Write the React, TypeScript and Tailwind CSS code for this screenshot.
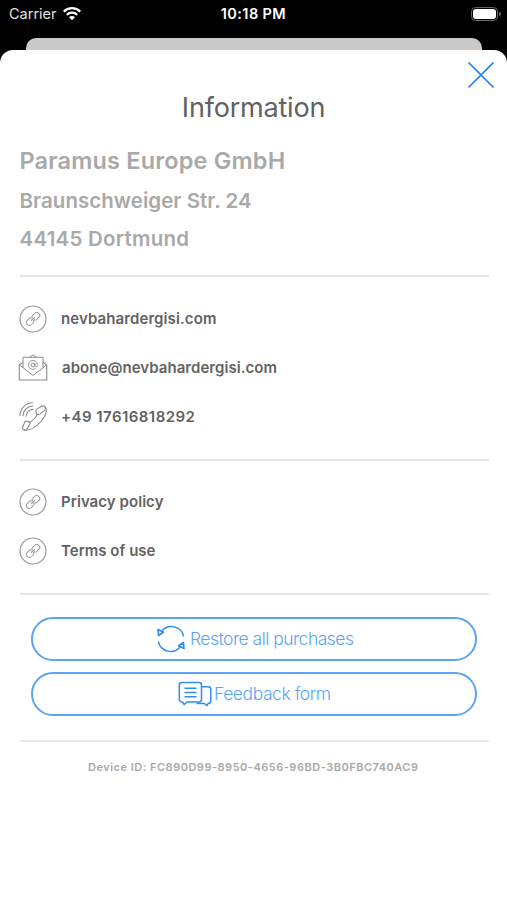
import type { ReactNode } from "react";

const LinkIcon = () => (
  <svg width="28" height="28" viewBox="0 0 28 28" fill="none" stroke="#999">
    <circle cx="14" cy="14" r="13" strokeWidth="1.2" />
    <g transform="rotate(-43 14 14)" strokeWidth="1">
      <path d="M13.600 12.800c-.1-1.100-.8-1.700-1.800-1.700H8.300a2.200 2.200 0 0 0-2.200 2.200v1.400a2.200 2.200 0 0 0 2.200 2.200h3.500c1 0 1.700-.6 1.800-1.700" />
      <path d="M14.400 12.800c.1-1.100.8-1.700 1.800-1.700h3.500a2.200 2.200 0 0 1 2.200 2.200v1.400a2.200 2.200 0 0 1-2.200 2.200h-3.500c-1 0-1.700-.6-1.800-1.700" />
      <path d="M11.500 14h5" strokeWidth="1.300" />
    </g>
  </svg>
);

const MailIcon = () => (
  <svg width="30" height="28" viewBox="0 0 30 28" fill="none" stroke="#8a8a8a" strokeLinejoin="round">
    <path d="M5 8.500 1.300 10.800v15.200h27.400V10.800L25 8.500" strokeWidth="1.100" />
    <path d="M5 13.700V3.300h20v10.400M11.500 3.300 15 .9l3.500 2.400" />
    <path d="m1.300 10.800 13.700 10.600 13.700-10.600" />
    <circle cx="15" cy="11" r="1.900" strokeWidth=".9" />
    <path d="M16.900 9.200v2.500c0 1.700 2.600 1.300 2.600-.9a4.500 4.500 0 1 0-1.900 3.800" strokeWidth=".9" />
  </svg>
);

const PhoneIcon = () => (
  <svg width="28" height="30" viewBox="0 0 28 30" fill="none" stroke="#8a8a8a" strokeWidth="1.100" strokeLinecap="round" strokeLinejoin="round">
    <path d="M22.200 4.200c1.800-.7 3.400-.3 4.200 1.100 1.600 3.300.3 8.900-4.500 14.200-5.700 6.200-12.200 9.300-16.400 8.600-2-.4-2.900-2.400-1.500-3.900" />
    <path d="M22.200 4.200 18 7.100c-1.100.8-1.400 2-.9 3.200l.6 1.300c.3.800.2 1.400-.2 2.100-1.400 2.400-3.200 4.300-5.500 5.900-.7.500-1.300.6-2 .3l-1.400-.5c-1.100-.4-2.200-.2-2.900.7L4 24.200" />
    <path d="M17.900 12c.9.700 2.200.6 3.200-.1l3.900-3c1.100-.9 1.700-2.200 1.400-3.600M10.300 19.900c.9.900.9 2.100.2 3.100l-2.400 3.500c-.7 1-1.600 1.600-2.600 1.600" />
    <path d="M.9 13.500C1.200 6.500 6.700 1 13.500.8M4 13.800C4.200 8.400 8.400 4.200 13.700 4M7.200 14c.2-3.500 2.900-6.300 6.600-6.600" />
  </svg>
);

const RestoreIcon = () => (
  <svg width="28" height="28" viewBox="0 0 28 28" fill="none" stroke="#2f8cf0" strokeWidth="1.4" strokeLinejoin="round">
    <path d="M4.700 6.300A12.500 12.500 0 0 1 26.700 11.500" />
    <path d="M23.300 21.700A12.500 12.500 0 0 1 1.300 16.500" />
    <path d="M1 4.400 6.400 7.200 1.600 10.500z" strokeWidth="1.700" />
    <path d="M27 23.600 21.600 20.800 26.400 17.500z" strokeWidth="1.700" />
  </svg>
);

const FeedbackIcon = () => (
  <svg width="34" height="26" viewBox="0 0 34 26" fill="none" stroke="#2f8cf0" strokeWidth="1.5" strokeLinejoin="round">
    <path d="M4 1.500h17c1.600 0 2.500 1 2.500 2.500v14.500c0 1.500-1 2.500-2.500 2.500H9l-2.800 2.500L4.500 21C2.500 21 1.300 20 1.300 18.300V4c0-1.500 1-2.500 2.700-2.500z" />
    <path d="M23.500 5.800h6.600c1.700 0 2.700 1 2.700 2.600v11.300c0 1.700-1.100 2.600-2.500 2.600L29 24.600l-2.700-2.100h-7.800" />
    <path d="M6.500 7.200h12M6.500 11.500h12M6.500 15.800h12" />
  </svg>
);

const contacts = [
  { title: "nevbahardergisi.com", icon: <LinkIcon />, text: "tracking-[0.1px]" },
  { title: "abone@nevbahardergisi.com", icon: <MailIcon />, text: "pl-px tracking-[0.05px]" },
  { title: "+49 17616818292", icon: <PhoneIcon />, text: "tracking-[0.45px]" },
];

const legal = [
  { title: "Privacy policy", icon: <LinkIcon />, text: "tracking-[0.06px]" },
  { title: "Terms of use", icon: <LinkIcon />, text: "tracking-[0.02px]" },
];

const Divider = () => <hr className="-mr-0.5 h-0.5 border-0 bg-[#e6e6e6]" />;

const Row = ({ title, icon, text }: { title: string; icon: ReactNode; text: string }) => (
  <a href="#" className="flex h-[49px] items-center">
    <span className="-ml-0.5 flex w-[30px] shrink-0 justify-center">{icon}</span>
    <span className={`ml-[13.5px] text-[15px] leading-5 font-semibold text-[#626262] ${text}`}>
      {title}
    </span>
  </a>
);

const PillButton = ({ className, children }: { className: string; children: ReactNode }) => (
  <button
    className={`flex h-11 w-full items-center rounded-full border-2 border-[#5ba3f3] text-[17.5px] font-light text-[#5ba5f6] ${className}`}
  >
    {children}
  </button>
);

const StatusBar = () => (
  <div className="grid h-7 grid-cols-3 items-center px-[9px] text-[14.5px] text-white">
    <div className="flex items-center gap-1.5">
      <span className="text-[#e0e0e0]">Carrier</span>
      <svg width="18" height="14" viewBox="0 0 18 14" fill="none" stroke="white" strokeWidth="2.200">
        <path d="M.8 4.600a11.600 11.600 0 0 1 16.400 0M3.800 7.700a7.400 7.400 0 0 1 10.400 0" />
        <path d="M9 13.200 6 10.200a4.200 4.200 0 0 1 6 0z" fill="white" stroke="none" />
      </svg>
    </div>
    <span className="text-center font-semibold tracking-[0.4px] whitespace-nowrap">10:18 PM</span>
    <div className="-mr-[3px] flex items-center justify-end">
      <span className="h-[14px] w-[27px] rounded-[4.5px] border border-[#666] p-px">
        <span className="block h-full rounded-[3px] bg-white" />
      </span>
      <span className="ml-px h-1 w-[2px] rounded-r-full bg-[#666]" />
    </div>
  </div>
);

const App = () => {
  return (
    <div className="flex h-[900px] w-[507px] flex-col overflow-hidden bg-black font-['Inter','Liberation_Sans',sans-serif]">
      <StatusBar />
      <div className="mx-[26px] mt-2.5 h-3 w-[456px] shrink-0 rounded-t-[10px] bg-[#cacaca]" />

      <main className="flex-1 rounded-t-[13px] bg-white">
        <div className="flex h-[42px] justify-end pt-3 pr-3">
          <button aria-label="Close" className="h-[27px]">
            <svg width="28" height="27" viewBox="0 0 28 27" stroke="#1b82f2" strokeWidth="1.700">
              <path d="m1.500 .5 25 25M26.500 .5l-25 25" />
            </svg>
          </button>
        </div>
        <h1 className="text-center text-[27px] leading-8 font-normal tracking-[-0.2px] text-[#626262]">
          Information
        </h1>

        <div className="pr-5 pl-[19.5px]">
          <address className="mt-[21px] h-[130px] font-semibold not-italic text-[#a9a9a9]">
            <p className="text-[23.5px] leading-8 tracking-[0.17px]">Paramus Europe GmbH</p>
            <p className="mt-2 text-[20.5px] leading-8 tracking-[0.03px]">Braunschweiger Str. 24</p>
            <p className="mt-1.5 text-[20.5px] leading-8 tracking-[0.24px]">44145 Dortmund</p>
          </address>
          <Divider />
          <nav className="mt-[17px] mb-[18px]">
            {contacts.map((item) => (
              <Row key={item.title} {...item} />
            ))}
          </nav>
          <Divider />
          <nav className="mt-4 mb-[18px]">
            {legal.map((item) => (
              <Row key={item.title} {...item} />
            ))}
          </nav>
          <Divider />
          <div className="mt-[22px] mb-6 ml-[11.5px] flex w-[446px] flex-col gap-[11px]">
            <PillButton className="gap-[5px] pl-[124px] tracking-[-0.5px]">
              <RestoreIcon />
              <span>Restore all purchases</span>
            </PillButton>
            <PillButton className="gap-0.5 pl-[145px] tracking-[-0.45px]">
              <FeedbackIcon />
              <span>Feedback form</span>
            </PillButton>
          </div>
          <Divider />
          <p className="mt-[17px] text-center text-[11px] leading-4 font-semibold tracking-[0.5px] text-[#a9a9a9]">
            Device ID: FC890D99-8950-4656-96BD-3B0FBC740AC9
          </p>
        </div>
      </main>
    </div>
  );
};

export default App;
